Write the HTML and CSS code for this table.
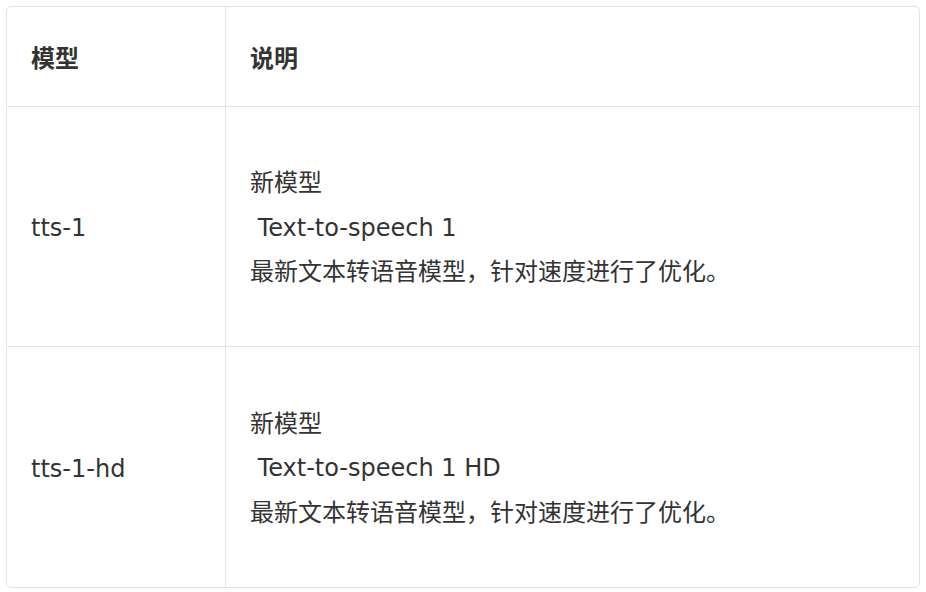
FILE: index.html
```html
<!DOCTYPE html>
<html lang="zh">
<head>
<meta charset="utf-8">
<link rel="stylesheet" href="styles.css">
</head>
<body>
<div class="wrap">
<table class="models">
  <thead>
    <tr><th class="c1">模型</th><th class="c2">说明</th></tr>
  </thead>
  <tbody>
    <tr>
      <td class="c1">tts-1</td>
      <td class="c2"><div class="line">新模型</div><div class="line">&nbsp;Text-to-speech 1</div><div class="line">最新文本转语音模型，针对速度进行了优化。</div></td>
    </tr>
    <tr>
      <td class="c1">tts-1-hd</td>
      <td class="c2"><div class="line">新模型</div><div class="line">&nbsp;Text-to-speech 1 HD</div><div class="line">最新文本转语音模型，针对速度进行了优化。</div></td>
    </tr>
  </tbody>
</table>
</div>
</body>
</html>
```
FILE: styles.css
```css
html, body { margin: 0; padding: 0; background: #fff; }
body {
  padding: 6px;
  font-family: "DejaVu Sans", "Noto Sans CJK SC", sans-serif;
  color: #333;
  font-size: 24px;
}
.models {
  width: 914px;
  border-collapse: separate;
  border-spacing: 0;
  border: 1px solid #e3e3e3;
  border-radius: 5px;
}
.models th, .models td {
  text-align: left;
  vertical-align: middle;
  padding: 0 24px;
  border-bottom: 1px solid #e3e3e3;
}
.models th { height: 99px; font-weight: bold; font-family: "Noto Sans CJK SC", sans-serif; }
.models td { height: 236px; padding-top: 3px; }
.models tr:last-child td { border-bottom: none; height: 237px; }
.models .c1 { width: 170px; border-right: 1px solid #e3e3e3; }
.line { line-height: 44.5px; }
```
